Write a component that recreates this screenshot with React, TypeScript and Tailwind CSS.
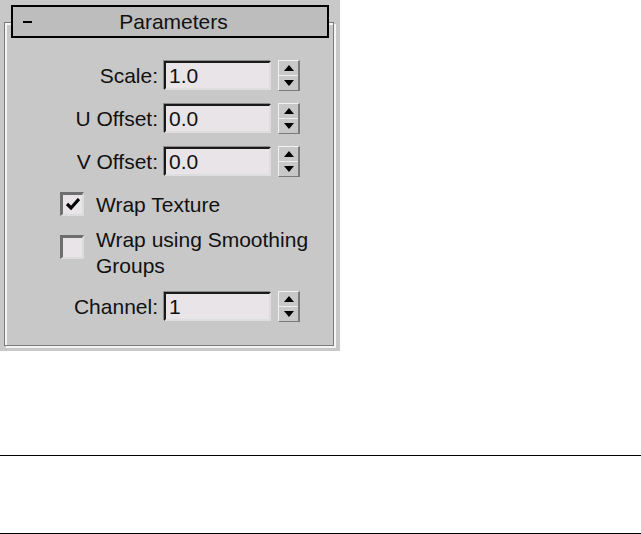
import React from 'react';

const font = { fontFamily: '"Liberation Sans", Arial, sans-serif' };

const Spinner: React.FC = () => (
  <div className="ml-[7px] flex h-[31px] w-[22px] flex-col border-r-2 border-b border-[#7a7a7a] border-t border-l border-t-[#f2f2f2] border-l-[#f2f2f2] bg-[#c8c8c8]">
    <div className="flex flex-1 items-center justify-center border-b border-[#ececec]">
      <svg width="10" height="6" viewBox="0 0 10 6">
        <path d="M5 0 L10 6 L0 6 Z" fill="#000" />
      </svg>
    </div>
    <div className="flex flex-1 items-center justify-center">
      <svg width="10" height="6" viewBox="0 0 10 6">
        <path d="M0 0 L10 0 L5 6 Z" fill="#000" />
      </svg>
    </div>
  </div>
);

const SpinnerRow: React.FC<{ label: string; value: string }> = ({ label, value }) => (
  <div className="flex items-center">
    <div className="w-[153px] text-right text-[21px] leading-none text-[#111]">{label}</div>
    <div className="ml-[6px] flex h-[29px] w-[107px] items-center border-t-2 border-l-2 border-t-[#1a1a1a] border-l-[#1a1a1a] border-r-2 border-b-2 border-r-[#dedede] border-b-[#dedede] bg-[#e8e4e8] pl-[3px] text-[21px] leading-none text-[#111] shadow-[-1px_-1px_0_#8a8a8a]">
      {value}
    </div>
    <Spinner />
  </div>
);

const Checkbox: React.FC<{ checked?: boolean }> = ({ checked }) => (
  <div className="flex h-[24px] w-[24px] shrink-0 items-center justify-center border-t-[3px] border-l-[3px] border-t-[#6e6e6e] border-l-[#6e6e6e] border-r-2 border-b-2 border-r-[#dcdcdc] border-b-[#dcdcdc] bg-[#e8e4e8]">
    {checked && (
      <svg width="14" height="13" viewBox="0 0 14 13">
        <path d="M1 6 L5 10 L13 1" stroke="#000" strokeWidth="3.2" fill="none" />
      </svg>
    )}
  </div>
);

export default function App() {
  return (
    <div className="flex h-[534px] w-[641px] flex-col bg-white" style={font}>
      {/* Rollout panel */}
      <div className="h-[351px] w-[340px] bg-[#c8c8c8] pt-[22px] pl-[4px]">
        <div className="relative h-[324px] w-[330px] border border-[#7c7c7c] shadow-[inset_2px_2px_0_#f4f4f4,2px_2px_0_#f4f4f4]">
          {/* Header button */}
          <div className="absolute top-[-18px] left-[6px] flex h-[33px] w-[318px] items-center border-2 border-black bg-[#bdbdbd]">
            <span className="ml-[10px] block h-[2px] w-[9px] bg-black" />
            <span className="flex-1 pr-[12px] text-center text-[21px] leading-none text-[#111]">Parameters</span>
          </div>

          <div className="flex flex-col pt-[37px]">
            <SpinnerRow label="Scale:" value="1.0" />
            <div className="mt-[12px]">
              <SpinnerRow label="U Offset:" value="0.0" />
            </div>
            <div className="mt-[12px]">
              <SpinnerRow label="V Offset:" value="0.0" />
            </div>

            <div className="mt-[15px] ml-[55px] flex items-center">
              <Checkbox checked />
              <span className="ml-[12px] text-[21px] leading-none text-[#111]">Wrap Texture</span>
            </div>

            <div className="mt-[19px] ml-[55px] flex items-start">
              <Checkbox />
              <span className="ml-[12px] -mt-[8px] text-[21px] leading-[26px] text-[#111]">
                Wrap using Smoothing
                <br />
                Groups
              </span>
            </div>

            <div className="mt-[12px]">
              <SpinnerRow label="Channel:" value="1" />
            </div>
          </div>
        </div>
      </div>

      <div className="mt-[104px] h-px w-full bg-black" />
      <div className="mt-[77px] h-px w-full bg-black" />
    </div>
  );
}
